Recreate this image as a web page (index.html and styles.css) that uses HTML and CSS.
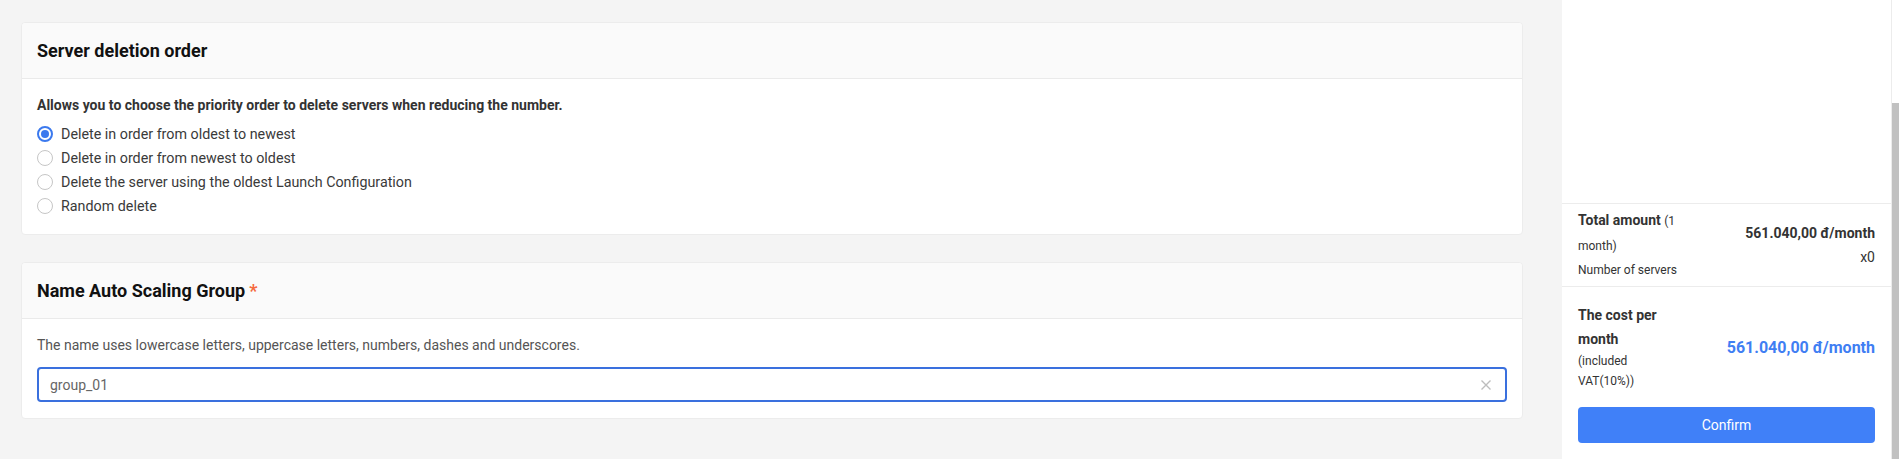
FILE: index.html
```html
<!DOCTYPE html>
<html lang="en">
<head>
<meta charset="utf-8">
<title>Auto Scaling Group</title>
<link rel="stylesheet" href="styles.css">
</head>
<body>
<div class="layout">
  <main class="main">
    <section class="card">
      <header class="card-header"><h2 class="card-title">Server deletion order</h2></header>
      <div class="card-body">
        <p class="desc-strong">Allows you to choose the priority order to delete servers when reducing the number.</p>
        <div class="radio-group">
          <label class="radio-row"><span class="radio checked"></span><span class="radio-label">Delete in order from oldest to newest</span></label>
          <label class="radio-row"><span class="radio"></span><span class="radio-label">Delete in order from newest to oldest</span></label>
          <label class="radio-row"><span class="radio"></span><span class="radio-label">Delete the server using the oldest Launch Configuration</span></label>
          <label class="radio-row"><span class="radio"></span><span class="radio-label">Random delete</span></label>
        </div>
      </div>
    </section>
    <section class="card card-second">
      <header class="card-header"><h2 class="card-title">Name Auto Scaling Group<span class="req">*</span></h2></header>
      <div class="card-body">
        <p class="desc">The name uses lowercase letters, uppercase letters, numbers, dashes and underscores.</p>
        <div class="input">
          <span class="input-value">group_01</span>
          <svg class="clear" width="12" height="12" viewBox="0 0 12 12"><path d="M1.5 1.5L10.5 10.5M10.5 1.5L1.5 10.5" stroke="#bdbdbd" stroke-width="1.4" fill="none"/></svg>
        </div>
      </div>
    </section>
  </main>
  <aside class="sidebar">
    <div class="side-content">
      <div class="side-top"></div>
      <div class="side-row side-total">
        <div class="side-left">
          <div class="line"><b class="strong">Total amount</b> <span class="small">(1 month)</span></div>
          <div class="line small">Number of servers</div>
        </div>
        <div class="side-right">
          <div class="line strong">561.040,00 đ/month</div>
          <div class="line">x0</div>
        </div>
      </div>
      <div class="side-cost">
        <div class="side-row">
          <div class="side-left">
            <div class="line strong">The cost per month</div>
            <div class="line-sm small">(included VAT(10%))</div>
          </div>
          <div class="side-right">
            <div class="price">561.040,00 đ/month</div>
          </div>
        </div>
        <button class="confirm">Confirm</button>
      </div>
    </div>
    <div class="scrollbar"><div class="thumb"></div></div>
  </aside>
</div>
</body>
</html>
```
FILE: styles.css
```css
* { box-sizing: border-box; }
html, body { margin: 0; padding: 0; height: 100%; }
body {
  font-family: Roboto, "Liberation Sans", Arial, sans-serif;
  font-size: 14px;
  color: #333;
  overflow: hidden;
}
.layout {
  display: flex;
  height: 459px;
}
.main {
  flex: 1;
  background: #f4f4f4;
  padding: 22px 39px 0 21px;
}
.card {
  background: #fff;
  border: 1px solid #ececec;
  border-radius: 4px;
}
.card-second { margin-top: 27px; }
.card-header {
  height: 56px;
  background: #fafafa;
  border-bottom: 1px solid #eaeaea;
  border-radius: 4px 4px 0 0;
  display: flex;
  align-items: center;
  padding: 0 15px;
}
.card-title {
  margin: 0;
  font-size: 18px;
  font-weight: 700;
  color: #111;
  line-height: 24px;
}
.req {
  color: #f56a3e;
  margin-left: 4px;
  font-weight: 700;
}
.card-body { padding: 16px 15px 16px; }
.desc-strong {
  margin: 0 0 7px;
  font-weight: 700;
  line-height: 20px;
  color: #333;
}
.desc {
  margin: 0 0 12px;
  line-height: 20px;
  color: #555;
}
.radio-group { display: flex; flex-direction: column; }
.radio-row {
  display: flex;
  align-items: center;
  height: 24px;
  gap: 8px;
}
.radio {
  width: 16px;
  height: 16px;
  border-radius: 50%;
  border: 1px solid #c6c6c6;
  background: #fff;
  display: flex;
  align-items: center;
  justify-content: center;
  flex: none;
}
.radio.checked { border: 2px solid #3b79ee; }
.radio.checked::after {
  content: "";
  width: 8px;
  height: 8px;
  border-radius: 50%;
  background: #3b79ee;
}
.radio-label { color: #3a3a3a; line-height: 20px; font-size: 14.3px; }
.input {
  height: 35px;
  border: 2px solid #3a70de;
  border-radius: 4px;
  display: flex;
  align-items: center;
  justify-content: space-between;
  padding: 0 13px 0 11px;
}
.input-value { color: #666; }
.clear { display: block; }
.sidebar {
  width: 337px;
  display: flex;
  background: #fff;
}
.side-content {
  flex: 1;
  display: flex;
  flex-direction: column;
}
.side-top {
  height: 207px;
  border-bottom: 1px solid #ececec;
}
.side-row {
  display: flex;
  justify-content: space-between;
  align-items: center;
}
.side-total {
  padding: 4px 16px;
  border-bottom: 1px solid #ececec;
}
.side-left { width: 102px; }
.side-right { text-align: right; }
.line { line-height: 24px; }
.line-sm { line-height: 20px; }
.strong { font-weight: 700; color: #333; }
.small { font-size: 12px; }
.side-cost { padding: 16px 16px 16px; }
.price {
  font-size: 16px;
  font-weight: 700;
  color: #3f7ef3;
}
.confirm {
  margin-top: 16px;
  width: 100%;
  height: 36px;
  border: none;
  border-radius: 4px;
  background: #4080f8;
  color: #fff;
  font-family: inherit;
  font-size: 14px;
}
.scrollbar {
  width: 8px;
  border-left: 1px solid #ececec;
  background: #fff;
  display: flex;
  flex-direction: column;
  padding-top: 103px;
}
.thumb {
  flex: 1;
  background: #c1c1c1;
}
```
